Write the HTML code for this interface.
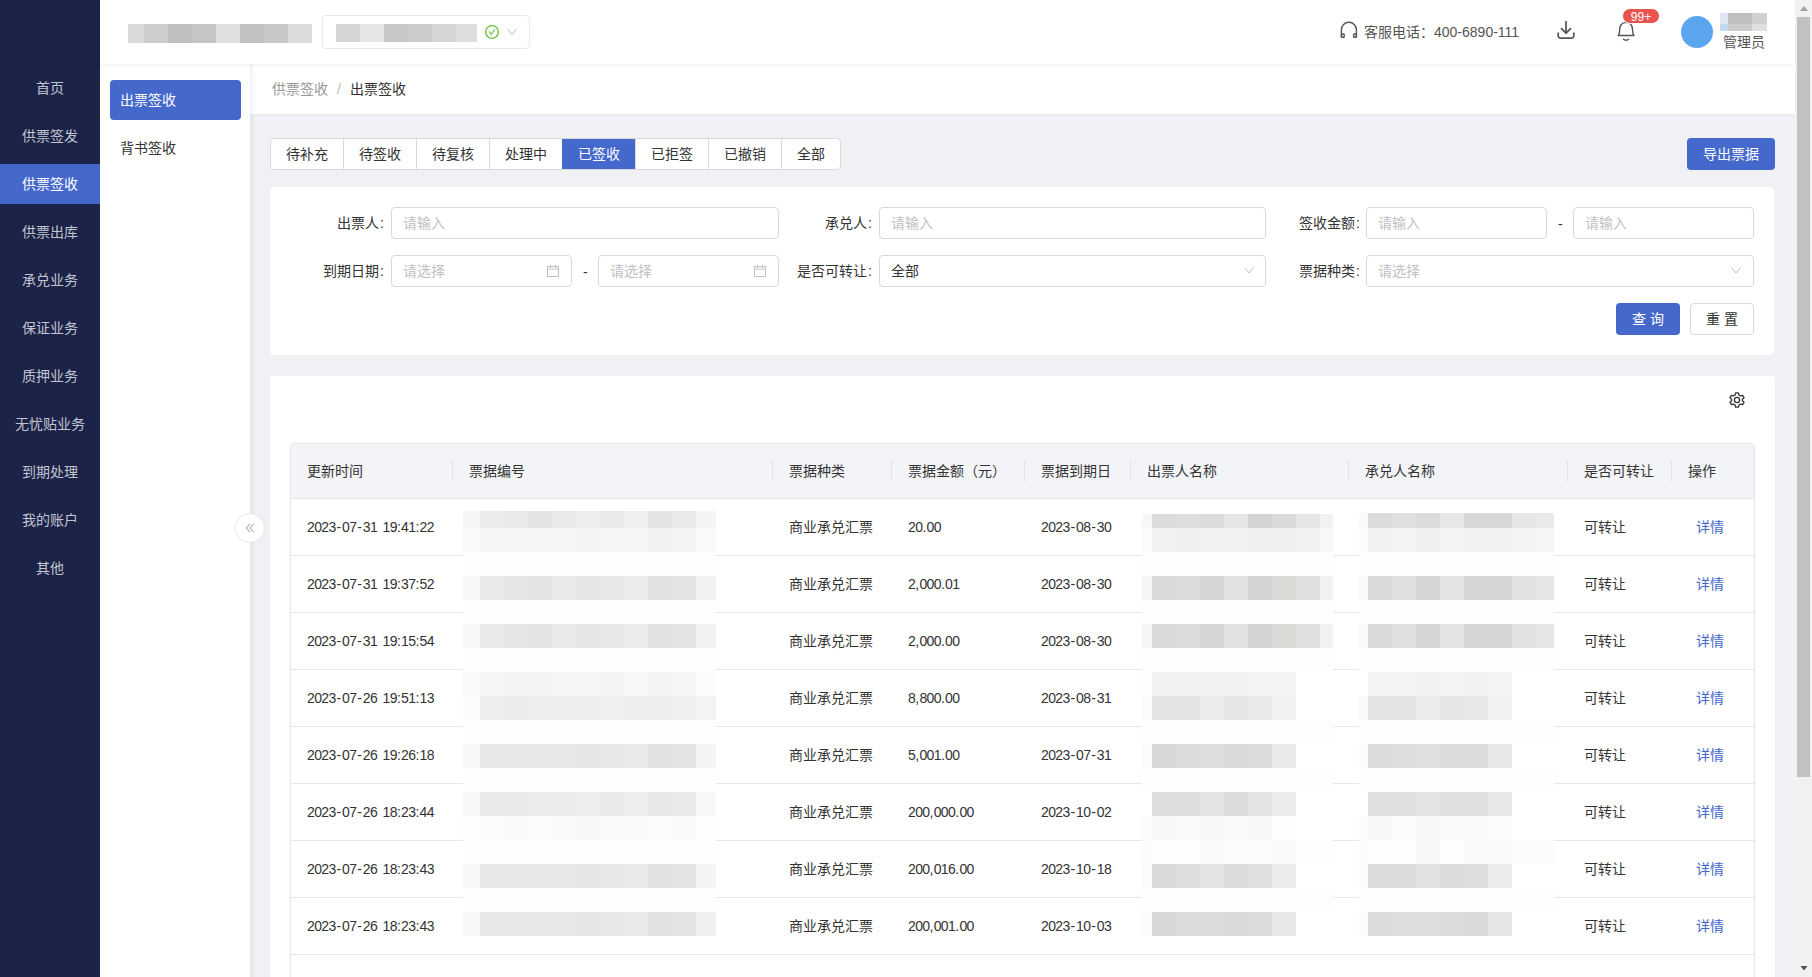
<!DOCTYPE html>
<html lang="zh-CN">
<head>
<meta charset="utf-8">
<style>
*{box-sizing:border-box;margin:0;padding:0}
html,body{width:1812px;height:977px;overflow:hidden;background:#f0f1f5}
body{font-family:"Liberation Sans",sans-serif;font-size:14px;color:#333;position:relative}
.a{position:absolute}
.nw{white-space:nowrap}
svg{position:absolute;overflow:visible}
#side{left:0;top:0;width:100px;height:977px;background:#1c2348}
.mi{position:absolute;left:0;width:100px;height:40px;line-height:40px;text-align:center;color:#c2c5d0}
.mi.on{background:#4468cc;color:#fff}
#hdr{left:100px;top:0;width:1695px;height:64px;background:#fff;box-shadow:0 1px 4px rgba(0,21,41,.06)}
#side2{left:100px;top:64px;width:150px;height:913px;background:#fff}
#crumb{left:250px;top:64px;width:1545px;height:50px;background:#fff;box-shadow:0 1px 3px rgba(0,0,0,.04)}
.shadowL{left:250px;top:64px;width:6px;height:913px;background:linear-gradient(90deg,rgba(0,0,0,.05),rgba(0,0,0,0))}
.tabs{left:270px;top:138px;height:32px;border:1px solid #d9d9d9;border-radius:4px;background:#fff;display:flex;overflow:hidden}
.tab{height:30px;line-height:30px;padding:0 15px;border-left:1px solid #d9d9d9;color:#333;white-space:nowrap}
.tab:first-child{border-left:0}
.tab.on{background:#4468cc;color:#fff;border-color:#4468cc}
.btnp{background:#4468cc;color:#fff;border-radius:4px;text-align:center;line-height:32px;height:32px}
.card{background:#fff;border-radius:4px}
.lbl{text-align:right;white-space:nowrap;line-height:32px;height:32px;color:#333}
.inp{height:32px;border:1px solid #d9d9d9;border-radius:4px;background:#fff;line-height:30px;padding-left:11px;color:#bfbfbf;white-space:nowrap}
.inp.val{color:#333}
.th,.td{position:absolute;white-space:nowrap;color:#333}
.lnk{color:#4468cc}
.mb{position:absolute}
</style>
</head>
<body>

<div id="side" class="a">
<div class="mi" style="top:68px">首页</div>
<div class="mi" style="top:116px">供票签发</div>
<div class="mi on" style="top:164px">供票签收</div>
<div class="mi" style="top:212px">供票出库</div>
<div class="mi" style="top:260px">承兑业务</div>
<div class="mi" style="top:308px">保证业务</div>
<div class="mi" style="top:356px">质押业务</div>
<div class="mi" style="top:404px">无忧贴业务</div>
<div class="mi" style="top:452px">到期处理</div>
<div class="mi" style="top:500px">我的账户</div>
<div class="mi" style="top:548px">其他</div>
</div>
<div id="side2" class="a">
<div class="a" style="left:10px;top:16px;width:131px;height:40px;border-radius:4px;background:#4468cc;color:#fff;line-height:40px;padding-left:10px">出票签收</div>
<div class="a" style="left:20px;top:64px;height:40px;line-height:40px;color:#333">背书签收</div>
</div>
<div id="crumb" class="a"><div class="a nw" style="left:22px;top:0;line-height:50px;color:#999">供票签收<span style="margin:0 9px;color:#bbb">/</span><span style="color:#333">出票签收</span></div></div>
<div class="a shadowL"></div>
<div id="hdr" class="a"></div>
<div class="mb" style="left:128px;top:24px;width:16px;height:19px;background:#d9d9d9"></div><div class="mb" style="left:144px;top:24px;width:24px;height:19px;background:#cdcdcd"></div><div class="mb" style="left:168px;top:24px;width:24px;height:19px;background:#c0c0c0"></div><div class="mb" style="left:192px;top:24px;width:24px;height:19px;background:#c5c5c5"></div><div class="mb" style="left:216px;top:24px;width:24px;height:19px;background:#e0e0e0"></div><div class="mb" style="left:240px;top:24px;width:24px;height:19px;background:#c2c2c2"></div><div class="mb" style="left:264px;top:24px;width:24px;height:19px;background:#c8c8c8"></div><div class="mb" style="left:288px;top:24px;width:24px;height:19px;background:#dcdcdc"></div>
<div class="a" style="left:322px;top:15px;width:208px;height:34px;border:1px solid #e8e8e8;border-radius:4px;background:#fff"></div>
<div class="mb" style="left:336px;top:24px;width:24px;height:18px;background:#d5d5d5"></div><div class="mb" style="left:360px;top:24px;width:24px;height:18px;background:#e5e5e5"></div><div class="mb" style="left:384px;top:24px;width:24px;height:18px;background:#c8c8c8"></div><div class="mb" style="left:408px;top:24px;width:24px;height:18px;background:#cccccc"></div><div class="mb" style="left:432px;top:24px;width:24px;height:18px;background:#d5d5d5"></div><div class="mb" style="left:456px;top:24px;width:21px;height:18px;background:#dddddd"></div>
<svg style="left:484px;top:24px" width="16" height="16" viewBox="0 0 16 16"><circle cx="8" cy="8" r="6.4" fill="none" stroke="#67c23a" stroke-width="1.3"/><path d="M4.9 7.4 L7.4 10.4 L10.7 5.3" fill="none" stroke="#67c23a" stroke-width="1.1"/></svg>
<svg style="left:507px;top:28px" width="10" height="8" viewBox="0 0 10 8"><path d="M0.5 1 L5 6.8 L9.5 1" fill="none" stroke="#c0c0c0" stroke-width="1"/></svg>
<svg style="left:1340px;top:21px" width="18" height="18" viewBox="0 0 18 18"><path d="M1.4 16.3 V8.8 A7.5 7.5 0 0 1 16.4 8.8 V16.3" fill="none" stroke="#555" stroke-width="1.4"/><rect x="1.4" y="13" width="2.8" height="3.3" rx="0.6" fill="none" stroke="#555" stroke-width="1.4"/><rect x="13.6" y="13" width="2.8" height="3.3" rx="0.6" fill="none" stroke="#555" stroke-width="1.4"/></svg>
<div class="a nw" style="left:1364px;top:22px;line-height:20px;color:#555">客服电话：400-6890-111</div>
<svg style="left:1550px;top:14px" width="34" height="32" viewBox="0 0 34 32"><path d="M16 7 V19" stroke="#555" stroke-width="1.7" fill="none"/><path d="M11 14.2 L16 19.2 L21 14.2" stroke="#555" stroke-width="1.7" fill="none"/><path d="M8.2 18.4 V21.8 a2.4 2.4 0 0 0 2.4 2.4 H21.4 a2.4 2.4 0 0 0 2.4 -2.4 V18.4" stroke="#555" stroke-width="1.7" fill="none"/></svg>
<svg style="left:1610px;top:5px" width="40" height="40" viewBox="0 0 40 40"><path d="M8.2 30.5 Q9.6 29 9.6 25.5 Q9.6 17.6 16.1 17.4 Q22.6 17.6 22.6 25.5 Q22.6 29 24 30.5 Z" fill="none" stroke="#555" stroke-width="1.4" stroke-linejoin="round"/><path d="M13 34 Q16.1 36.6 19.2 34" fill="none" stroke="#555" stroke-width="1.4"/></svg>
<div class="a nw" style="left:1622px;top:8px;width:38px;height:16px;border-radius:8px;background:#e85551;border:1px solid #fff;color:#fff;font-size:12px;line-height:16px;text-align:center">99+</div>
<div class="a" style="left:1681px;top:16px;width:32px;height:32px;border-radius:50%;background:#5ba4ee"></div>
<div class="mb" style="left:1720px;top:13px;width:8px;height:11px;background:#dfe8f2"></div><div class="mb" style="left:1728px;top:13px;width:24px;height:11px;background:#bfbfbf"></div><div class="mb" style="left:1752px;top:13px;width:15px;height:11px;background:#d0d0d0"></div><div class="mb" style="left:1720px;top:24px;width:8px;height:7px;background:#c2d9f0"></div><div class="mb" style="left:1728px;top:24px;width:24px;height:7px;background:#cbcbcb"></div><div class="mb" style="left:1752px;top:24px;width:15px;height:7px;background:#e0e0e0"></div>
<div class="a nw" style="left:1723px;top:32px;line-height:20px;color:#555">管理员</div>
<div class="a tabs"><div class="tab">待补充</div><div class="tab">待签收</div><div class="tab">待复核</div><div class="tab">处理中</div><div class="tab on">已签收</div><div class="tab">已拒签</div><div class="tab">已撤销</div><div class="tab">全部</div></div>
<div class="a btnp" style="left:1687px;top:138px;width:88px">导出票据</div>
<div class="a card" style="left:270px;top:187px;width:1504px;height:168px"></div>
<div class="a lbl" style="left:184px;top:207px;width:200px">出票人<span style="margin-left:1.5px">:</span></div>
<div class="a inp" style="left:391px;top:207px;width:388px">请输入</div>
<div class="a lbl" style="left:672px;top:207px;width:200px">承兑人<span style="margin-left:1.5px">:</span></div>
<div class="a inp" style="left:879px;top:207px;width:387px">请输入</div>
<div class="a lbl" style="left:1160px;top:207px;width:200px">签收金额<span style="margin-left:1.5px">:</span></div>
<div class="a inp" style="left:1366px;top:207px;width:181px">请输入</div>
<div class="a nw" style="left:1558px;top:208px;line-height:32px">-</div>
<div class="a inp" style="left:1573px;top:207px;width:181px">请输入</div>
<div class="a lbl" style="left:184px;top:255px;width:200px">到期日期<span style="margin-left:1.5px">:</span></div>
<div class="a inp" style="left:391px;top:255px;width:181px">请选择</div>
<svg style="left:547px;top:265px" width="12" height="12" viewBox="0 0 12 12"><rect x="0.5" y="1.5" width="11" height="10" fill="none" stroke="#c0c0c0" stroke-width="1"/><path d="M0.5 4 H11.5 M3.5 0 V3 M8.5 0 V3" stroke="#c0c0c0" stroke-width="1" fill="none"/></svg>
<div class="a nw" style="left:583px;top:256px;line-height:32px">-</div>
<div class="a inp" style="left:598px;top:255px;width:181px">请选择</div>
<svg style="left:754px;top:265px" width="12" height="12" viewBox="0 0 12 12"><rect x="0.5" y="1.5" width="11" height="10" fill="none" stroke="#c0c0c0" stroke-width="1"/><path d="M0.5 4 H11.5 M3.5 0 V3 M8.5 0 V3" stroke="#c0c0c0" stroke-width="1" fill="none"/></svg>
<div class="a lbl" style="left:672px;top:255px;width:200px">是否可转让<span style="margin-left:1.5px">:</span></div>
<div class="a inp val" style="left:879px;top:255px;width:387px">全部</div>
<svg style="left:1244px;top:267px" width="10" height="7" viewBox="0 0 10 7"><path d="M0.5 0.5 L5 6 L9.5 0.5" fill="none" stroke="#c0c0c0" stroke-width="1"/></svg>
<div class="a lbl" style="left:1160px;top:255px;width:200px">票据种类<span style="margin-left:1.5px">:</span></div>
<div class="a inp" style="left:1366px;top:255px;width:388px">请选择</div>
<svg style="left:1731px;top:267px" width="10" height="7" viewBox="0 0 10 7"><path d="M0.5 0.5 L5 6 L9.5 0.5" fill="none" stroke="#c0c0c0" stroke-width="1"/></svg>
<div class="a btnp" style="left:1616px;top:303px;width:64px">查 询</div>
<div class="a" style="left:1690px;top:303px;width:64px;height:32px;border:1px solid #d9d9d9;border-radius:4px;background:#fff;text-align:center;line-height:30px;color:#333">重 置</div>
<div class="a card" style="left:270px;top:376px;width:1505px;height:640px"></div>
<svg style="left:1729px;top:392px" width="16" height="16" viewBox="0 0 16 16"><path d="M6.6 0.9 H9.4 L9.9 3 L11.5 3.9 L13.6 3.3 L15 5.7 L13.4 7.2 V8.8 L15 10.3 L13.6 12.7 L11.5 12.1 L9.9 13 L9.4 15.1 H6.6 L6.1 13 L4.5 12.1 L2.4 12.7 L1 10.3 L2.6 8.8 V7.2 L1 5.7 L2.4 3.3 L4.5 3.9 L6.1 3 Z" fill="none" stroke="#333" stroke-width="1.3" stroke-linejoin="round"/><circle cx="8" cy="8" r="2.6" fill="none" stroke="#333" stroke-width="1.3"/></svg>
<div class="a" style="left:290px;top:443px;width:1465px;height:600px;border:1px solid #e6e6e6;border-radius:4px 4px 0 0;background:#fff"></div>
<div class="a" style="left:291px;top:444px;width:1463px;height:54px;background:#f3f4f8;border-radius:3px 3px 0 0"></div>
<div class="a" style="left:290px;top:498px;width:1465px;height:1px;background:#e6e6e6"></div>
<div class="th" style="left:307px;top:461px;line-height:20px">更新时间</div>
<div class="th" style="left:469px;top:461px;line-height:20px">票据编号</div>
<div class="a" style="left:452px;top:460px;width:1px;height:22px;background:#e3e3e3"></div>
<div class="th" style="left:789px;top:461px;line-height:20px">票据种类</div>
<div class="a" style="left:772px;top:460px;width:1px;height:22px;background:#e3e3e3"></div>
<div class="th" style="left:908px;top:461px;line-height:20px">票据金额（元）</div>
<div class="a" style="left:891px;top:460px;width:1px;height:22px;background:#e3e3e3"></div>
<div class="th" style="left:1041px;top:461px;line-height:20px">票据到期日</div>
<div class="a" style="left:1024px;top:460px;width:1px;height:22px;background:#e3e3e3"></div>
<div class="th" style="left:1147px;top:461px;line-height:20px">出票人名称</div>
<div class="a" style="left:1130px;top:460px;width:1px;height:22px;background:#e3e3e3"></div>
<div class="th" style="left:1365px;top:461px;line-height:20px">承兑人名称</div>
<div class="a" style="left:1348px;top:460px;width:1px;height:22px;background:#e3e3e3"></div>
<div class="th" style="left:1584px;top:461px;line-height:20px">是否可转让</div>
<div class="a" style="left:1567px;top:460px;width:1px;height:22px;background:#e3e3e3"></div>
<div class="th" style="left:1688px;top:461px;line-height:20px">操作</div>
<div class="a" style="left:1671px;top:460px;width:1px;height:22px;background:#e3e3e3"></div>
<div class="a" style="left:290px;top:555px;width:1465px;height:1px;background:#e6e6e6"></div>
<div class="td" style="left:307px;top:517px;line-height:20px"><span style="letter-spacing:-0.65px">2</span><span style="letter-spacing:-0.65px">0</span><span style="letter-spacing:-0.65px">2</span><span style="letter-spacing:-0.65px">3</span><span style="margin:0 0.9px">-</span><span style="letter-spacing:-0.65px">0</span><span style="letter-spacing:-0.65px">7</span><span style="margin:0 0.9px">-</span><span style="letter-spacing:-0.65px">3</span><span style="letter-spacing:-0.65px">1</span><span style="margin:0 0.8px"> </span><span style="letter-spacing:-0.65px">1</span><span style="letter-spacing:-0.65px">9</span><span style="margin:0 0.2px">:</span><span style="letter-spacing:-0.65px">4</span><span style="letter-spacing:-0.65px">1</span><span style="margin:0 0.2px">:</span><span style="letter-spacing:-0.65px">2</span><span style="letter-spacing:-0.65px">2</span></div>
<div class="td" style="left:789px;top:517px;line-height:20px">商业承兑汇票</div>
<div class="td" style="left:908px;top:517px;line-height:20px"><span style="letter-spacing:-0.65px">2</span><span style="letter-spacing:-0.65px">0</span><span style="margin:0 0.2px">.</span><span style="letter-spacing:-0.65px">0</span><span style="letter-spacing:-0.65px">0</span></div>
<div class="td" style="left:1041px;top:517px;line-height:20px"><span style="letter-spacing:-0.65px">2</span><span style="letter-spacing:-0.65px">0</span><span style="letter-spacing:-0.65px">2</span><span style="letter-spacing:-0.65px">3</span><span style="margin:0 0.9px">-</span><span style="letter-spacing:-0.65px">0</span><span style="letter-spacing:-0.65px">8</span><span style="margin:0 0.9px">-</span><span style="letter-spacing:-0.65px">3</span><span style="letter-spacing:-0.65px">0</span></div>
<div class="td" style="left:1584px;top:517px;line-height:20px">可转让</div>
<div class="td lnk" style="left:1696px;top:517px;line-height:20px">详情</div>
<div class="a" style="left:290px;top:612px;width:1465px;height:1px;background:#e6e6e6"></div>
<div class="td" style="left:307px;top:574px;line-height:20px"><span style="letter-spacing:-0.65px">2</span><span style="letter-spacing:-0.65px">0</span><span style="letter-spacing:-0.65px">2</span><span style="letter-spacing:-0.65px">3</span><span style="margin:0 0.9px">-</span><span style="letter-spacing:-0.65px">0</span><span style="letter-spacing:-0.65px">7</span><span style="margin:0 0.9px">-</span><span style="letter-spacing:-0.65px">3</span><span style="letter-spacing:-0.65px">1</span><span style="margin:0 0.8px"> </span><span style="letter-spacing:-0.65px">1</span><span style="letter-spacing:-0.65px">9</span><span style="margin:0 0.2px">:</span><span style="letter-spacing:-0.65px">3</span><span style="letter-spacing:-0.65px">7</span><span style="margin:0 0.2px">:</span><span style="letter-spacing:-0.65px">5</span><span style="letter-spacing:-0.65px">2</span></div>
<div class="td" style="left:789px;top:574px;line-height:20px">商业承兑汇票</div>
<div class="td" style="left:908px;top:574px;line-height:20px"><span style="letter-spacing:-0.65px">2</span><span style="margin:0 0.2px">,</span><span style="letter-spacing:-0.65px">0</span><span style="letter-spacing:-0.65px">0</span><span style="letter-spacing:-0.65px">0</span><span style="margin:0 0.2px">.</span><span style="letter-spacing:-0.65px">0</span><span style="letter-spacing:-0.65px">1</span></div>
<div class="td" style="left:1041px;top:574px;line-height:20px"><span style="letter-spacing:-0.65px">2</span><span style="letter-spacing:-0.65px">0</span><span style="letter-spacing:-0.65px">2</span><span style="letter-spacing:-0.65px">3</span><span style="margin:0 0.9px">-</span><span style="letter-spacing:-0.65px">0</span><span style="letter-spacing:-0.65px">8</span><span style="margin:0 0.9px">-</span><span style="letter-spacing:-0.65px">3</span><span style="letter-spacing:-0.65px">0</span></div>
<div class="td" style="left:1584px;top:574px;line-height:20px">可转让</div>
<div class="td lnk" style="left:1696px;top:574px;line-height:20px">详情</div>
<div class="a" style="left:290px;top:669px;width:1465px;height:1px;background:#e6e6e6"></div>
<div class="td" style="left:307px;top:631px;line-height:20px"><span style="letter-spacing:-0.65px">2</span><span style="letter-spacing:-0.65px">0</span><span style="letter-spacing:-0.65px">2</span><span style="letter-spacing:-0.65px">3</span><span style="margin:0 0.9px">-</span><span style="letter-spacing:-0.65px">0</span><span style="letter-spacing:-0.65px">7</span><span style="margin:0 0.9px">-</span><span style="letter-spacing:-0.65px">3</span><span style="letter-spacing:-0.65px">1</span><span style="margin:0 0.8px"> </span><span style="letter-spacing:-0.65px">1</span><span style="letter-spacing:-0.65px">9</span><span style="margin:0 0.2px">:</span><span style="letter-spacing:-0.65px">1</span><span style="letter-spacing:-0.65px">5</span><span style="margin:0 0.2px">:</span><span style="letter-spacing:-0.65px">5</span><span style="letter-spacing:-0.65px">4</span></div>
<div class="td" style="left:789px;top:631px;line-height:20px">商业承兑汇票</div>
<div class="td" style="left:908px;top:631px;line-height:20px"><span style="letter-spacing:-0.65px">2</span><span style="margin:0 0.2px">,</span><span style="letter-spacing:-0.65px">0</span><span style="letter-spacing:-0.65px">0</span><span style="letter-spacing:-0.65px">0</span><span style="margin:0 0.2px">.</span><span style="letter-spacing:-0.65px">0</span><span style="letter-spacing:-0.65px">0</span></div>
<div class="td" style="left:1041px;top:631px;line-height:20px"><span style="letter-spacing:-0.65px">2</span><span style="letter-spacing:-0.65px">0</span><span style="letter-spacing:-0.65px">2</span><span style="letter-spacing:-0.65px">3</span><span style="margin:0 0.9px">-</span><span style="letter-spacing:-0.65px">0</span><span style="letter-spacing:-0.65px">8</span><span style="margin:0 0.9px">-</span><span style="letter-spacing:-0.65px">3</span><span style="letter-spacing:-0.65px">0</span></div>
<div class="td" style="left:1584px;top:631px;line-height:20px">可转让</div>
<div class="td lnk" style="left:1696px;top:631px;line-height:20px">详情</div>
<div class="a" style="left:290px;top:726px;width:1465px;height:1px;background:#e6e6e6"></div>
<div class="td" style="left:307px;top:688px;line-height:20px"><span style="letter-spacing:-0.65px">2</span><span style="letter-spacing:-0.65px">0</span><span style="letter-spacing:-0.65px">2</span><span style="letter-spacing:-0.65px">3</span><span style="margin:0 0.9px">-</span><span style="letter-spacing:-0.65px">0</span><span style="letter-spacing:-0.65px">7</span><span style="margin:0 0.9px">-</span><span style="letter-spacing:-0.65px">2</span><span style="letter-spacing:-0.65px">6</span><span style="margin:0 0.8px"> </span><span style="letter-spacing:-0.65px">1</span><span style="letter-spacing:-0.65px">9</span><span style="margin:0 0.2px">:</span><span style="letter-spacing:-0.65px">5</span><span style="letter-spacing:-0.65px">1</span><span style="margin:0 0.2px">:</span><span style="letter-spacing:-0.65px">1</span><span style="letter-spacing:-0.65px">3</span></div>
<div class="td" style="left:789px;top:688px;line-height:20px">商业承兑汇票</div>
<div class="td" style="left:908px;top:688px;line-height:20px"><span style="letter-spacing:-0.65px">8</span><span style="margin:0 0.2px">,</span><span style="letter-spacing:-0.65px">8</span><span style="letter-spacing:-0.65px">0</span><span style="letter-spacing:-0.65px">0</span><span style="margin:0 0.2px">.</span><span style="letter-spacing:-0.65px">0</span><span style="letter-spacing:-0.65px">0</span></div>
<div class="td" style="left:1041px;top:688px;line-height:20px"><span style="letter-spacing:-0.65px">2</span><span style="letter-spacing:-0.65px">0</span><span style="letter-spacing:-0.65px">2</span><span style="letter-spacing:-0.65px">3</span><span style="margin:0 0.9px">-</span><span style="letter-spacing:-0.65px">0</span><span style="letter-spacing:-0.65px">8</span><span style="margin:0 0.9px">-</span><span style="letter-spacing:-0.65px">3</span><span style="letter-spacing:-0.65px">1</span></div>
<div class="td" style="left:1584px;top:688px;line-height:20px">可转让</div>
<div class="td lnk" style="left:1696px;top:688px;line-height:20px">详情</div>
<div class="a" style="left:290px;top:783px;width:1465px;height:1px;background:#e6e6e6"></div>
<div class="td" style="left:307px;top:745px;line-height:20px"><span style="letter-spacing:-0.65px">2</span><span style="letter-spacing:-0.65px">0</span><span style="letter-spacing:-0.65px">2</span><span style="letter-spacing:-0.65px">3</span><span style="margin:0 0.9px">-</span><span style="letter-spacing:-0.65px">0</span><span style="letter-spacing:-0.65px">7</span><span style="margin:0 0.9px">-</span><span style="letter-spacing:-0.65px">2</span><span style="letter-spacing:-0.65px">6</span><span style="margin:0 0.8px"> </span><span style="letter-spacing:-0.65px">1</span><span style="letter-spacing:-0.65px">9</span><span style="margin:0 0.2px">:</span><span style="letter-spacing:-0.65px">2</span><span style="letter-spacing:-0.65px">6</span><span style="margin:0 0.2px">:</span><span style="letter-spacing:-0.65px">1</span><span style="letter-spacing:-0.65px">8</span></div>
<div class="td" style="left:789px;top:745px;line-height:20px">商业承兑汇票</div>
<div class="td" style="left:908px;top:745px;line-height:20px"><span style="letter-spacing:-0.65px">5</span><span style="margin:0 0.2px">,</span><span style="letter-spacing:-0.65px">0</span><span style="letter-spacing:-0.65px">0</span><span style="letter-spacing:-0.65px">1</span><span style="margin:0 0.2px">.</span><span style="letter-spacing:-0.65px">0</span><span style="letter-spacing:-0.65px">0</span></div>
<div class="td" style="left:1041px;top:745px;line-height:20px"><span style="letter-spacing:-0.65px">2</span><span style="letter-spacing:-0.65px">0</span><span style="letter-spacing:-0.65px">2</span><span style="letter-spacing:-0.65px">3</span><span style="margin:0 0.9px">-</span><span style="letter-spacing:-0.65px">0</span><span style="letter-spacing:-0.65px">7</span><span style="margin:0 0.9px">-</span><span style="letter-spacing:-0.65px">3</span><span style="letter-spacing:-0.65px">1</span></div>
<div class="td" style="left:1584px;top:745px;line-height:20px">可转让</div>
<div class="td lnk" style="left:1696px;top:745px;line-height:20px">详情</div>
<div class="a" style="left:290px;top:840px;width:1465px;height:1px;background:#e6e6e6"></div>
<div class="td" style="left:307px;top:802px;line-height:20px"><span style="letter-spacing:-0.65px">2</span><span style="letter-spacing:-0.65px">0</span><span style="letter-spacing:-0.65px">2</span><span style="letter-spacing:-0.65px">3</span><span style="margin:0 0.9px">-</span><span style="letter-spacing:-0.65px">0</span><span style="letter-spacing:-0.65px">7</span><span style="margin:0 0.9px">-</span><span style="letter-spacing:-0.65px">2</span><span style="letter-spacing:-0.65px">6</span><span style="margin:0 0.8px"> </span><span style="letter-spacing:-0.65px">1</span><span style="letter-spacing:-0.65px">8</span><span style="margin:0 0.2px">:</span><span style="letter-spacing:-0.65px">2</span><span style="letter-spacing:-0.65px">3</span><span style="margin:0 0.2px">:</span><span style="letter-spacing:-0.65px">4</span><span style="letter-spacing:-0.65px">4</span></div>
<div class="td" style="left:789px;top:802px;line-height:20px">商业承兑汇票</div>
<div class="td" style="left:908px;top:802px;line-height:20px"><span style="letter-spacing:-0.65px">2</span><span style="letter-spacing:-0.65px">0</span><span style="letter-spacing:-0.65px">0</span><span style="margin:0 0.2px">,</span><span style="letter-spacing:-0.65px">0</span><span style="letter-spacing:-0.65px">0</span><span style="letter-spacing:-0.65px">0</span><span style="margin:0 0.2px">.</span><span style="letter-spacing:-0.65px">0</span><span style="letter-spacing:-0.65px">0</span></div>
<div class="td" style="left:1041px;top:802px;line-height:20px"><span style="letter-spacing:-0.65px">2</span><span style="letter-spacing:-0.65px">0</span><span style="letter-spacing:-0.65px">2</span><span style="letter-spacing:-0.65px">3</span><span style="margin:0 0.9px">-</span><span style="letter-spacing:-0.65px">1</span><span style="letter-spacing:-0.65px">0</span><span style="margin:0 0.9px">-</span><span style="letter-spacing:-0.65px">0</span><span style="letter-spacing:-0.65px">2</span></div>
<div class="td" style="left:1584px;top:802px;line-height:20px">可转让</div>
<div class="td lnk" style="left:1696px;top:802px;line-height:20px">详情</div>
<div class="a" style="left:290px;top:897px;width:1465px;height:1px;background:#e6e6e6"></div>
<div class="td" style="left:307px;top:859px;line-height:20px"><span style="letter-spacing:-0.65px">2</span><span style="letter-spacing:-0.65px">0</span><span style="letter-spacing:-0.65px">2</span><span style="letter-spacing:-0.65px">3</span><span style="margin:0 0.9px">-</span><span style="letter-spacing:-0.65px">0</span><span style="letter-spacing:-0.65px">7</span><span style="margin:0 0.9px">-</span><span style="letter-spacing:-0.65px">2</span><span style="letter-spacing:-0.65px">6</span><span style="margin:0 0.8px"> </span><span style="letter-spacing:-0.65px">1</span><span style="letter-spacing:-0.65px">8</span><span style="margin:0 0.2px">:</span><span style="letter-spacing:-0.65px">2</span><span style="letter-spacing:-0.65px">3</span><span style="margin:0 0.2px">:</span><span style="letter-spacing:-0.65px">4</span><span style="letter-spacing:-0.65px">3</span></div>
<div class="td" style="left:789px;top:859px;line-height:20px">商业承兑汇票</div>
<div class="td" style="left:908px;top:859px;line-height:20px"><span style="letter-spacing:-0.65px">2</span><span style="letter-spacing:-0.65px">0</span><span style="letter-spacing:-0.65px">0</span><span style="margin:0 0.2px">,</span><span style="letter-spacing:-0.65px">0</span><span style="letter-spacing:-0.65px">1</span><span style="letter-spacing:-0.65px">6</span><span style="margin:0 0.2px">.</span><span style="letter-spacing:-0.65px">0</span><span style="letter-spacing:-0.65px">0</span></div>
<div class="td" style="left:1041px;top:859px;line-height:20px"><span style="letter-spacing:-0.65px">2</span><span style="letter-spacing:-0.65px">0</span><span style="letter-spacing:-0.65px">2</span><span style="letter-spacing:-0.65px">3</span><span style="margin:0 0.9px">-</span><span style="letter-spacing:-0.65px">1</span><span style="letter-spacing:-0.65px">0</span><span style="margin:0 0.9px">-</span><span style="letter-spacing:-0.65px">1</span><span style="letter-spacing:-0.65px">8</span></div>
<div class="td" style="left:1584px;top:859px;line-height:20px">可转让</div>
<div class="td lnk" style="left:1696px;top:859px;line-height:20px">详情</div>
<div class="a" style="left:290px;top:954px;width:1465px;height:1px;background:#e6e6e6"></div>
<div class="td" style="left:307px;top:916px;line-height:20px"><span style="letter-spacing:-0.65px">2</span><span style="letter-spacing:-0.65px">0</span><span style="letter-spacing:-0.65px">2</span><span style="letter-spacing:-0.65px">3</span><span style="margin:0 0.9px">-</span><span style="letter-spacing:-0.65px">0</span><span style="letter-spacing:-0.65px">7</span><span style="margin:0 0.9px">-</span><span style="letter-spacing:-0.65px">2</span><span style="letter-spacing:-0.65px">6</span><span style="margin:0 0.8px"> </span><span style="letter-spacing:-0.65px">1</span><span style="letter-spacing:-0.65px">8</span><span style="margin:0 0.2px">:</span><span style="letter-spacing:-0.65px">2</span><span style="letter-spacing:-0.65px">3</span><span style="margin:0 0.2px">:</span><span style="letter-spacing:-0.65px">4</span><span style="letter-spacing:-0.65px">3</span></div>
<div class="td" style="left:789px;top:916px;line-height:20px">商业承兑汇票</div>
<div class="td" style="left:908px;top:916px;line-height:20px"><span style="letter-spacing:-0.65px">2</span><span style="letter-spacing:-0.65px">0</span><span style="letter-spacing:-0.65px">0</span><span style="margin:0 0.2px">,</span><span style="letter-spacing:-0.65px">0</span><span style="letter-spacing:-0.65px">0</span><span style="letter-spacing:-0.65px">1</span><span style="margin:0 0.2px">.</span><span style="letter-spacing:-0.65px">0</span><span style="letter-spacing:-0.65px">0</span></div>
<div class="td" style="left:1041px;top:916px;line-height:20px"><span style="letter-spacing:-0.65px">2</span><span style="letter-spacing:-0.65px">0</span><span style="letter-spacing:-0.65px">2</span><span style="letter-spacing:-0.65px">3</span><span style="margin:0 0.9px">-</span><span style="letter-spacing:-0.65px">1</span><span style="letter-spacing:-0.65px">0</span><span style="margin:0 0.9px">-</span><span style="letter-spacing:-0.65px">0</span><span style="letter-spacing:-0.65px">3</span></div>
<div class="td" style="left:1584px;top:916px;line-height:20px">可转让</div>
<div class="td lnk" style="left:1696px;top:916px;line-height:20px">详情</div>
<div class="mb" style="left:463px;top:511px;width:17px;height:17px;background:#f5f5f5"></div><div class="mb" style="left:480px;top:511px;width:24px;height:17px;background:#ebebeb"></div><div class="mb" style="left:504px;top:511px;width:24px;height:17px;background:#e9e9e9"></div><div class="mb" style="left:528px;top:511px;width:24px;height:17px;background:#e3e3e3"></div><div class="mb" style="left:552px;top:511px;width:24px;height:17px;background:#e9eaea"></div><div class="mb" style="left:576px;top:511px;width:24px;height:17px;background:#ededed"></div><div class="mb" style="left:600px;top:511px;width:24px;height:17px;background:#e9e9e9"></div><div class="mb" style="left:624px;top:511px;width:24px;height:17px;background:#efefef"></div><div class="mb" style="left:648px;top:511px;width:24px;height:17px;background:#e4e4e4"></div><div class="mb" style="left:672px;top:511px;width:24px;height:17px;background:#e8e9e9"></div><div class="mb" style="left:696px;top:511px;width:20px;height:17px;background:#f4f4f4"></div><div class="mb" style="left:463px;top:528px;width:17px;height:24px;background:#fafafa"></div><div class="mb" style="left:480px;top:528px;width:24px;height:24px;background:#f5f5f5"></div><div class="mb" style="left:504px;top:528px;width:24px;height:24px;background:#f5f5f5"></div><div class="mb" style="left:528px;top:528px;width:24px;height:24px;background:#f5f5f5"></div><div class="mb" style="left:552px;top:528px;width:24px;height:24px;background:#f6f6f6"></div><div class="mb" style="left:576px;top:528px;width:24px;height:24px;background:#f3f3f3"></div><div class="mb" style="left:600px;top:528px;width:24px;height:24px;background:#f5f5f5"></div><div class="mb" style="left:624px;top:528px;width:24px;height:24px;background:#f6f6f6"></div><div class="mb" style="left:648px;top:528px;width:24px;height:24px;background:#f1f3f3"></div><div class="mb" style="left:672px;top:528px;width:24px;height:24px;background:#f4f4f4"></div><div class="mb" style="left:696px;top:528px;width:20px;height:24px;background:#f9f9f9"></div><div class="mb" style="left:463px;top:552px;width:17px;height:24px;background:#fefefe"></div><div class="mb" style="left:480px;top:552px;width:24px;height:24px;background:#fefefe"></div><div class="mb" style="left:504px;top:552px;width:24px;height:24px;background:#fefefe"></div><div class="mb" style="left:528px;top:552px;width:24px;height:24px;background:#fefefe"></div><div class="mb" style="left:552px;top:552px;width:24px;height:24px;background:#fefefe"></div><div class="mb" style="left:576px;top:552px;width:24px;height:24px;background:#fefefe"></div><div class="mb" style="left:600px;top:552px;width:24px;height:24px;background:#fefefe"></div><div class="mb" style="left:624px;top:552px;width:24px;height:24px;background:#fefefe"></div><div class="mb" style="left:648px;top:552px;width:24px;height:24px;background:#fefefe"></div><div class="mb" style="left:672px;top:552px;width:24px;height:24px;background:#fefefe"></div><div class="mb" style="left:696px;top:552px;width:20px;height:24px;background:#fefefe"></div><div class="mb" style="left:463px;top:576px;width:17px;height:24px;background:#f7f7f7"></div><div class="mb" style="left:480px;top:576px;width:24px;height:24px;background:#e8eaea"></div><div class="mb" style="left:504px;top:576px;width:24px;height:24px;background:#e6e6e6"></div><div class="mb" style="left:528px;top:576px;width:24px;height:24px;background:#e3e3e3"></div><div class="mb" style="left:552px;top:576px;width:24px;height:24px;background:#e8e9e9"></div><div class="mb" style="left:576px;top:576px;width:24px;height:24px;background:#e6e6e6"></div><div class="mb" style="left:600px;top:576px;width:24px;height:24px;background:#e8e8e8"></div><div class="mb" style="left:624px;top:576px;width:24px;height:24px;background:#ececec"></div><div class="mb" style="left:648px;top:576px;width:24px;height:24px;background:#e2e2e2"></div><div class="mb" style="left:672px;top:576px;width:24px;height:24px;background:#e3e3e3"></div><div class="mb" style="left:696px;top:576px;width:20px;height:24px;background:#f2f2f2"></div><div class="mb" style="left:463px;top:600px;width:17px;height:24px;background:#fefefe"></div><div class="mb" style="left:480px;top:600px;width:24px;height:24px;background:#fefefe"></div><div class="mb" style="left:504px;top:600px;width:24px;height:24px;background:#fefefe"></div><div class="mb" style="left:528px;top:600px;width:24px;height:24px;background:#fefefe"></div><div class="mb" style="left:552px;top:600px;width:24px;height:24px;background:#fefefe"></div><div class="mb" style="left:576px;top:600px;width:24px;height:24px;background:#fefefe"></div><div class="mb" style="left:600px;top:600px;width:24px;height:24px;background:#fefefe"></div><div class="mb" style="left:624px;top:600px;width:24px;height:24px;background:#fefefe"></div><div class="mb" style="left:648px;top:600px;width:24px;height:24px;background:#fefefe"></div><div class="mb" style="left:672px;top:600px;width:24px;height:24px;background:#fefefe"></div><div class="mb" style="left:696px;top:600px;width:20px;height:24px;background:#fefefe"></div><div class="mb" style="left:463px;top:624px;width:17px;height:24px;background:#f7f7f7"></div><div class="mb" style="left:480px;top:624px;width:24px;height:24px;background:#e8eaea"></div><div class="mb" style="left:504px;top:624px;width:24px;height:24px;background:#e6e6e6"></div><div class="mb" style="left:528px;top:624px;width:24px;height:24px;background:#e3e3e3"></div><div class="mb" style="left:552px;top:624px;width:24px;height:24px;background:#e8e9e9"></div><div class="mb" style="left:576px;top:624px;width:24px;height:24px;background:#e6e6e6"></div><div class="mb" style="left:600px;top:624px;width:24px;height:24px;background:#e8e8e8"></div><div class="mb" style="left:624px;top:624px;width:24px;height:24px;background:#ececec"></div><div class="mb" style="left:648px;top:624px;width:24px;height:24px;background:#e2e2e2"></div><div class="mb" style="left:672px;top:624px;width:24px;height:24px;background:#e3e3e3"></div><div class="mb" style="left:696px;top:624px;width:20px;height:24px;background:#f2f2f2"></div><div class="mb" style="left:463px;top:648px;width:17px;height:24px;background:#fefefe"></div><div class="mb" style="left:480px;top:648px;width:24px;height:24px;background:#fefefe"></div><div class="mb" style="left:504px;top:648px;width:24px;height:24px;background:#fefefe"></div><div class="mb" style="left:528px;top:648px;width:24px;height:24px;background:#fefefe"></div><div class="mb" style="left:552px;top:648px;width:24px;height:24px;background:#fefefe"></div><div class="mb" style="left:576px;top:648px;width:24px;height:24px;background:#fefefe"></div><div class="mb" style="left:600px;top:648px;width:24px;height:24px;background:#fefefe"></div><div class="mb" style="left:624px;top:648px;width:24px;height:24px;background:#fefefe"></div><div class="mb" style="left:648px;top:648px;width:24px;height:24px;background:#fefefe"></div><div class="mb" style="left:672px;top:648px;width:24px;height:24px;background:#fefefe"></div><div class="mb" style="left:696px;top:648px;width:20px;height:24px;background:#fefefe"></div><div class="mb" style="left:463px;top:672px;width:17px;height:24px;background:#fafafa"></div><div class="mb" style="left:480px;top:672px;width:24px;height:24px;background:#f5f5f5"></div><div class="mb" style="left:504px;top:672px;width:24px;height:24px;background:#f3f3f3"></div><div class="mb" style="left:528px;top:672px;width:24px;height:24px;background:#f3f5f4"></div><div class="mb" style="left:552px;top:672px;width:24px;height:24px;background:#f6f6f6"></div><div class="mb" style="left:576px;top:672px;width:24px;height:24px;background:#f5f5f5"></div><div class="mb" style="left:600px;top:672px;width:24px;height:24px;background:#f3f3f3"></div><div class="mb" style="left:624px;top:672px;width:24px;height:24px;background:#f7f7f7"></div><div class="mb" style="left:648px;top:672px;width:24px;height:24px;background:#f3f3f3"></div><div class="mb" style="left:672px;top:672px;width:24px;height:24px;background:#f5f5f5"></div><div class="mb" style="left:696px;top:672px;width:20px;height:24px;background:#fbfbfb"></div><div class="mb" style="left:463px;top:696px;width:17px;height:24px;background:#fbfbfb"></div><div class="mb" style="left:480px;top:696px;width:24px;height:24px;background:#eeeeee"></div><div class="mb" style="left:504px;top:696px;width:24px;height:24px;background:#ececec"></div><div class="mb" style="left:528px;top:696px;width:24px;height:24px;background:#eeeeec"></div><div class="mb" style="left:552px;top:696px;width:24px;height:24px;background:#ecefee"></div><div class="mb" style="left:576px;top:696px;width:24px;height:24px;background:#eeeeec"></div><div class="mb" style="left:600px;top:696px;width:24px;height:24px;background:#efefef"></div><div class="mb" style="left:624px;top:696px;width:24px;height:24px;background:#eeeeee"></div><div class="mb" style="left:648px;top:696px;width:24px;height:24px;background:#eceef0"></div><div class="mb" style="left:672px;top:696px;width:24px;height:24px;background:#f0eeee"></div><div class="mb" style="left:696px;top:696px;width:20px;height:24px;background:#f3f3f3"></div><div class="mb" style="left:463px;top:720px;width:17px;height:24px;background:#fefefe"></div><div class="mb" style="left:480px;top:720px;width:24px;height:24px;background:#fefefe"></div><div class="mb" style="left:504px;top:720px;width:24px;height:24px;background:#fefefe"></div><div class="mb" style="left:528px;top:720px;width:24px;height:24px;background:#fefefe"></div><div class="mb" style="left:552px;top:720px;width:24px;height:24px;background:#fefefe"></div><div class="mb" style="left:576px;top:720px;width:24px;height:24px;background:#fefefe"></div><div class="mb" style="left:600px;top:720px;width:24px;height:24px;background:#fefefe"></div><div class="mb" style="left:624px;top:720px;width:24px;height:24px;background:#fefefe"></div><div class="mb" style="left:648px;top:720px;width:24px;height:24px;background:#fefefe"></div><div class="mb" style="left:672px;top:720px;width:24px;height:24px;background:#fefefe"></div><div class="mb" style="left:696px;top:720px;width:20px;height:24px;background:#fefefe"></div><div class="mb" style="left:463px;top:744px;width:17px;height:24px;background:#f7f7f7"></div><div class="mb" style="left:480px;top:744px;width:24px;height:24px;background:#e7e9e9"></div><div class="mb" style="left:504px;top:744px;width:24px;height:24px;background:#e9e8e6"></div><div class="mb" style="left:528px;top:744px;width:24px;height:24px;background:#e8e8e6"></div><div class="mb" style="left:552px;top:744px;width:24px;height:24px;background:#e7e7e7"></div><div class="mb" style="left:576px;top:744px;width:24px;height:24px;background:#e6e6e6"></div><div class="mb" style="left:600px;top:744px;width:24px;height:24px;background:#e7e7e5"></div><div class="mb" style="left:624px;top:744px;width:24px;height:24px;background:#e9e9e9"></div><div class="mb" style="left:648px;top:744px;width:24px;height:24px;background:#e2e2e2"></div><div class="mb" style="left:672px;top:744px;width:24px;height:24px;background:#e3e3e3"></div><div class="mb" style="left:696px;top:744px;width:20px;height:24px;background:#f3f4f4"></div><div class="mb" style="left:463px;top:768px;width:17px;height:24px;background:#fefefe"></div><div class="mb" style="left:480px;top:768px;width:24px;height:24px;background:#fefefe"></div><div class="mb" style="left:504px;top:768px;width:24px;height:24px;background:#fefefe"></div><div class="mb" style="left:528px;top:768px;width:24px;height:24px;background:#fefefe"></div><div class="mb" style="left:552px;top:768px;width:24px;height:24px;background:#fefefe"></div><div class="mb" style="left:576px;top:768px;width:24px;height:24px;background:#fefefe"></div><div class="mb" style="left:600px;top:768px;width:24px;height:24px;background:#fefefe"></div><div class="mb" style="left:624px;top:768px;width:24px;height:24px;background:#fefefe"></div><div class="mb" style="left:648px;top:768px;width:24px;height:24px;background:#fefefe"></div><div class="mb" style="left:672px;top:768px;width:24px;height:24px;background:#fefefe"></div><div class="mb" style="left:696px;top:768px;width:20px;height:24px;background:#fefefe"></div><div class="mb" style="left:463px;top:792px;width:17px;height:24px;background:#f7f7f7"></div><div class="mb" style="left:480px;top:792px;width:24px;height:24px;background:#e9ebeb"></div><div class="mb" style="left:504px;top:792px;width:24px;height:24px;background:#eaeae8"></div><div class="mb" style="left:528px;top:792px;width:24px;height:24px;background:#ebebeb"></div><div class="mb" style="left:552px;top:792px;width:24px;height:24px;background:#ebebeb"></div><div class="mb" style="left:576px;top:792px;width:24px;height:24px;background:#ededeb"></div><div class="mb" style="left:600px;top:792px;width:24px;height:24px;background:#eaeaea"></div><div class="mb" style="left:624px;top:792px;width:24px;height:24px;background:#ededeb"></div><div class="mb" style="left:648px;top:792px;width:24px;height:24px;background:#e6e8e8"></div><div class="mb" style="left:672px;top:792px;width:24px;height:24px;background:#eaeaea"></div><div class="mb" style="left:696px;top:792px;width:20px;height:24px;background:#f7f7f7"></div><div class="mb" style="left:463px;top:816px;width:17px;height:24px;background:#fdfdfd"></div><div class="mb" style="left:480px;top:816px;width:24px;height:24px;background:#fbfbfb"></div><div class="mb" style="left:504px;top:816px;width:24px;height:24px;background:#fafafa"></div><div class="mb" style="left:528px;top:816px;width:24px;height:24px;background:#fbfbf9"></div><div class="mb" style="left:552px;top:816px;width:24px;height:24px;background:#fafafa"></div><div class="mb" style="left:576px;top:816px;width:24px;height:24px;background:#f8f8f8"></div><div class="mb" style="left:600px;top:816px;width:24px;height:24px;background:#f9fafa"></div><div class="mb" style="left:624px;top:816px;width:24px;height:24px;background:#f9fafa"></div><div class="mb" style="left:648px;top:816px;width:24px;height:24px;background:#fbfbfb"></div><div class="mb" style="left:672px;top:816px;width:24px;height:24px;background:#f9f9f9"></div><div class="mb" style="left:696px;top:816px;width:20px;height:24px;background:#fdfdfd"></div><div class="mb" style="left:463px;top:840px;width:17px;height:24px;background:#fefefe"></div><div class="mb" style="left:480px;top:840px;width:24px;height:24px;background:#fefefe"></div><div class="mb" style="left:504px;top:840px;width:24px;height:24px;background:#fefefe"></div><div class="mb" style="left:528px;top:840px;width:24px;height:24px;background:#fefefe"></div><div class="mb" style="left:552px;top:840px;width:24px;height:24px;background:#fefefe"></div><div class="mb" style="left:576px;top:840px;width:24px;height:24px;background:#fefefe"></div><div class="mb" style="left:600px;top:840px;width:24px;height:24px;background:#fefefe"></div><div class="mb" style="left:624px;top:840px;width:24px;height:24px;background:#fefefe"></div><div class="mb" style="left:648px;top:840px;width:24px;height:24px;background:#fefefe"></div><div class="mb" style="left:672px;top:840px;width:24px;height:24px;background:#fefefe"></div><div class="mb" style="left:696px;top:840px;width:20px;height:24px;background:#fefefe"></div><div class="mb" style="left:463px;top:864px;width:17px;height:24px;background:#f7f7f7"></div><div class="mb" style="left:480px;top:864px;width:24px;height:24px;background:#e7e9e9"></div><div class="mb" style="left:504px;top:864px;width:24px;height:24px;background:#e9e8e6"></div><div class="mb" style="left:528px;top:864px;width:24px;height:24px;background:#e8e8e6"></div><div class="mb" style="left:552px;top:864px;width:24px;height:24px;background:#e7e7e7"></div><div class="mb" style="left:576px;top:864px;width:24px;height:24px;background:#e6e6e6"></div><div class="mb" style="left:600px;top:864px;width:24px;height:24px;background:#e7e7e5"></div><div class="mb" style="left:624px;top:864px;width:24px;height:24px;background:#e9e9e9"></div><div class="mb" style="left:648px;top:864px;width:24px;height:24px;background:#e2e2e2"></div><div class="mb" style="left:672px;top:864px;width:24px;height:24px;background:#e3e3e3"></div><div class="mb" style="left:696px;top:864px;width:20px;height:24px;background:#f3f4f4"></div><div class="mb" style="left:463px;top:888px;width:17px;height:24px;background:#fefefe"></div><div class="mb" style="left:480px;top:888px;width:24px;height:24px;background:#fefefe"></div><div class="mb" style="left:504px;top:888px;width:24px;height:24px;background:#fefefe"></div><div class="mb" style="left:528px;top:888px;width:24px;height:24px;background:#fefefe"></div><div class="mb" style="left:552px;top:888px;width:24px;height:24px;background:#fefefe"></div><div class="mb" style="left:576px;top:888px;width:24px;height:24px;background:#fefefe"></div><div class="mb" style="left:600px;top:888px;width:24px;height:24px;background:#fefefe"></div><div class="mb" style="left:624px;top:888px;width:24px;height:24px;background:#fefefe"></div><div class="mb" style="left:648px;top:888px;width:24px;height:24px;background:#fefefe"></div><div class="mb" style="left:672px;top:888px;width:24px;height:24px;background:#fefefe"></div><div class="mb" style="left:696px;top:888px;width:20px;height:24px;background:#fefefe"></div><div class="mb" style="left:463px;top:912px;width:17px;height:24px;background:#f7f7f7"></div><div class="mb" style="left:480px;top:912px;width:24px;height:24px;background:#e7e9e9"></div><div class="mb" style="left:504px;top:912px;width:24px;height:24px;background:#e9e8e6"></div><div class="mb" style="left:528px;top:912px;width:24px;height:24px;background:#e8e8e6"></div><div class="mb" style="left:552px;top:912px;width:24px;height:24px;background:#e7e7e7"></div><div class="mb" style="left:576px;top:912px;width:24px;height:24px;background:#e6e6e6"></div><div class="mb" style="left:600px;top:912px;width:24px;height:24px;background:#e7e7e5"></div><div class="mb" style="left:624px;top:912px;width:24px;height:24px;background:#e9e9e9"></div><div class="mb" style="left:648px;top:912px;width:24px;height:24px;background:#e2e2e2"></div><div class="mb" style="left:672px;top:912px;width:24px;height:24px;background:#e3e3e3"></div><div class="mb" style="left:696px;top:912px;width:20px;height:24px;background:#eff0f2"></div><div class="mb" style="left:463px;top:936px;width:17px;height:18px;background:#ffffff"></div><div class="mb" style="left:480px;top:936px;width:24px;height:18px;background:#ffffff"></div><div class="mb" style="left:504px;top:936px;width:24px;height:18px;background:#ffffff"></div><div class="mb" style="left:528px;top:936px;width:24px;height:18px;background:#ffffff"></div><div class="mb" style="left:552px;top:936px;width:24px;height:18px;background:#ffffff"></div><div class="mb" style="left:576px;top:936px;width:24px;height:18px;background:#ffffff"></div><div class="mb" style="left:600px;top:936px;width:24px;height:18px;background:#ffffff"></div><div class="mb" style="left:624px;top:936px;width:24px;height:18px;background:#ffffff"></div><div class="mb" style="left:648px;top:936px;width:24px;height:18px;background:#ffffff"></div><div class="mb" style="left:672px;top:936px;width:24px;height:18px;background:#ffffff"></div><div class="mb" style="left:696px;top:936px;width:20px;height:18px;background:#ffffff"></div>
<div class="mb" style="left:1142px;top:514px;width:10px;height:14px;background:#f7f7f7"></div><div class="mb" style="left:1152px;top:514px;width:24px;height:14px;background:#dcdcdc"></div><div class="mb" style="left:1176px;top:514px;width:24px;height:14px;background:#dedede"></div><div class="mb" style="left:1200px;top:514px;width:24px;height:14px;background:#dcdcdc"></div><div class="mb" style="left:1224px;top:514px;width:24px;height:14px;background:#e6e6e6"></div><div class="mb" style="left:1248px;top:514px;width:24px;height:14px;background:#d4d4d4"></div><div class="mb" style="left:1272px;top:514px;width:24px;height:14px;background:#dadada"></div><div class="mb" style="left:1296px;top:514px;width:24px;height:14px;background:#e5e5e5"></div><div class="mb" style="left:1320px;top:514px;width:13px;height:14px;background:#f2f2f2"></div><div class="mb" style="left:1142px;top:528px;width:10px;height:24px;background:#fbfbfb"></div><div class="mb" style="left:1152px;top:528px;width:24px;height:24px;background:#f2f2f2"></div><div class="mb" style="left:1176px;top:528px;width:24px;height:24px;background:#f0f0f0"></div><div class="mb" style="left:1200px;top:528px;width:24px;height:24px;background:#f1f1f1"></div><div class="mb" style="left:1224px;top:528px;width:24px;height:24px;background:#f2f2f2"></div><div class="mb" style="left:1248px;top:528px;width:24px;height:24px;background:#eff1f0"></div><div class="mb" style="left:1272px;top:528px;width:24px;height:24px;background:#f0f0ee"></div><div class="mb" style="left:1296px;top:528px;width:24px;height:24px;background:#f1f1f1"></div><div class="mb" style="left:1320px;top:528px;width:13px;height:24px;background:#f8f8f8"></div><div class="mb" style="left:1142px;top:552px;width:10px;height:24px;background:#fefefe"></div><div class="mb" style="left:1152px;top:552px;width:24px;height:24px;background:#fefefe"></div><div class="mb" style="left:1176px;top:552px;width:24px;height:24px;background:#fefefe"></div><div class="mb" style="left:1200px;top:552px;width:24px;height:24px;background:#fefefe"></div><div class="mb" style="left:1224px;top:552px;width:24px;height:24px;background:#fefefe"></div><div class="mb" style="left:1248px;top:552px;width:24px;height:24px;background:#fefefe"></div><div class="mb" style="left:1272px;top:552px;width:24px;height:24px;background:#fefefe"></div><div class="mb" style="left:1296px;top:552px;width:24px;height:24px;background:#fefefe"></div><div class="mb" style="left:1320px;top:552px;width:13px;height:24px;background:#fefefe"></div><div class="mb" style="left:1142px;top:576px;width:10px;height:24px;background:#f6f6f4"></div><div class="mb" style="left:1152px;top:576px;width:24px;height:24px;background:#dadad8"></div><div class="mb" style="left:1176px;top:576px;width:24px;height:24px;background:#dcdadb"></div><div class="mb" style="left:1200px;top:576px;width:24px;height:24px;background:#d6d6d6"></div><div class="mb" style="left:1224px;top:576px;width:24px;height:24px;background:#e2e2e4"></div><div class="mb" style="left:1248px;top:576px;width:24px;height:24px;background:#d3d3d3"></div><div class="mb" style="left:1272px;top:576px;width:24px;height:24px;background:#dadad6"></div><div class="mb" style="left:1296px;top:576px;width:24px;height:24px;background:#e0e0e0"></div><div class="mb" style="left:1320px;top:576px;width:13px;height:24px;background:#f2f2f2"></div><div class="mb" style="left:1142px;top:600px;width:10px;height:24px;background:#fefefe"></div><div class="mb" style="left:1152px;top:600px;width:24px;height:24px;background:#fefefe"></div><div class="mb" style="left:1176px;top:600px;width:24px;height:24px;background:#fefefe"></div><div class="mb" style="left:1200px;top:600px;width:24px;height:24px;background:#fefefe"></div><div class="mb" style="left:1224px;top:600px;width:24px;height:24px;background:#fefefe"></div><div class="mb" style="left:1248px;top:600px;width:24px;height:24px;background:#fefefe"></div><div class="mb" style="left:1272px;top:600px;width:24px;height:24px;background:#fefefe"></div><div class="mb" style="left:1296px;top:600px;width:24px;height:24px;background:#fefefe"></div><div class="mb" style="left:1320px;top:600px;width:13px;height:24px;background:#fefefe"></div><div class="mb" style="left:1142px;top:624px;width:10px;height:24px;background:#f6f6f4"></div><div class="mb" style="left:1152px;top:624px;width:24px;height:24px;background:#dadad8"></div><div class="mb" style="left:1176px;top:624px;width:24px;height:24px;background:#dcdadb"></div><div class="mb" style="left:1200px;top:624px;width:24px;height:24px;background:#d6d6d6"></div><div class="mb" style="left:1224px;top:624px;width:24px;height:24px;background:#e2e2e4"></div><div class="mb" style="left:1248px;top:624px;width:24px;height:24px;background:#d3d3d3"></div><div class="mb" style="left:1272px;top:624px;width:24px;height:24px;background:#dadad6"></div><div class="mb" style="left:1296px;top:624px;width:24px;height:24px;background:#e0e0e0"></div><div class="mb" style="left:1320px;top:624px;width:13px;height:24px;background:#f2f2f2"></div><div class="mb" style="left:1142px;top:648px;width:10px;height:24px;background:#fefefe"></div><div class="mb" style="left:1152px;top:648px;width:24px;height:24px;background:#fefefe"></div><div class="mb" style="left:1176px;top:648px;width:24px;height:24px;background:#fefefe"></div><div class="mb" style="left:1200px;top:648px;width:24px;height:24px;background:#fefefe"></div><div class="mb" style="left:1224px;top:648px;width:24px;height:24px;background:#fefefe"></div><div class="mb" style="left:1248px;top:648px;width:24px;height:24px;background:#fefefe"></div><div class="mb" style="left:1272px;top:648px;width:24px;height:24px;background:#fefefe"></div><div class="mb" style="left:1296px;top:648px;width:24px;height:24px;background:#fefefe"></div><div class="mb" style="left:1320px;top:648px;width:13px;height:24px;background:#fefefe"></div><div class="mb" style="left:1142px;top:672px;width:10px;height:24px;background:#fdfdfd"></div><div class="mb" style="left:1152px;top:672px;width:24px;height:24px;background:#f2f2f2"></div><div class="mb" style="left:1176px;top:672px;width:24px;height:24px;background:#f2f2f2"></div><div class="mb" style="left:1200px;top:672px;width:24px;height:24px;background:#f1f1f1"></div><div class="mb" style="left:1224px;top:672px;width:24px;height:24px;background:#f1f1f1"></div><div class="mb" style="left:1248px;top:672px;width:24px;height:24px;background:#f2f3f3"></div><div class="mb" style="left:1272px;top:672px;width:24px;height:24px;background:#f4f4f4"></div><div class="mb" style="left:1296px;top:672px;width:24px;height:24px;background:#fff"></div><div class="mb" style="left:1320px;top:672px;width:13px;height:24px;background:#fff"></div><div class="mb" style="left:1142px;top:696px;width:10px;height:24px;background:#fbfbfb"></div><div class="mb" style="left:1152px;top:696px;width:24px;height:24px;background:#e3e3e3"></div><div class="mb" style="left:1176px;top:696px;width:24px;height:24px;background:#e1e4e3"></div><div class="mb" style="left:1200px;top:696px;width:24px;height:24px;background:#ebebe9"></div><div class="mb" style="left:1224px;top:696px;width:24px;height:24px;background:#e5e5e3"></div><div class="mb" style="left:1248px;top:696px;width:24px;height:24px;background:#e9e9e9"></div><div class="mb" style="left:1272px;top:696px;width:24px;height:24px;background:#f1f1ef"></div><div class="mb" style="left:1296px;top:696px;width:24px;height:24px;background:#fff"></div><div class="mb" style="left:1320px;top:696px;width:13px;height:24px;background:#fff"></div><div class="mb" style="left:1142px;top:720px;width:10px;height:24px;background:#fefefe"></div><div class="mb" style="left:1152px;top:720px;width:24px;height:24px;background:#fefefe"></div><div class="mb" style="left:1176px;top:720px;width:24px;height:24px;background:#fefefe"></div><div class="mb" style="left:1200px;top:720px;width:24px;height:24px;background:#fefefe"></div><div class="mb" style="left:1224px;top:720px;width:24px;height:24px;background:#fefefe"></div><div class="mb" style="left:1248px;top:720px;width:24px;height:24px;background:#fefefe"></div><div class="mb" style="left:1272px;top:720px;width:24px;height:24px;background:#fefefe"></div><div class="mb" style="left:1296px;top:720px;width:24px;height:24px;background:#fefefe"></div><div class="mb" style="left:1320px;top:720px;width:13px;height:24px;background:#fefefe"></div><div class="mb" style="left:1142px;top:744px;width:10px;height:24px;background:#fbfbfb"></div><div class="mb" style="left:1152px;top:744px;width:24px;height:24px;background:#d8d8d8"></div><div class="mb" style="left:1176px;top:744px;width:24px;height:24px;background:#dadcdb"></div><div class="mb" style="left:1200px;top:744px;width:24px;height:24px;background:#dededc"></div><div class="mb" style="left:1224px;top:744px;width:24px;height:24px;background:#d9d9d9"></div><div class="mb" style="left:1248px;top:744px;width:24px;height:24px;background:#dcdcdc"></div><div class="mb" style="left:1272px;top:744px;width:24px;height:24px;background:#e9e9e7"></div><div class="mb" style="left:1296px;top:744px;width:24px;height:24px;background:#fff"></div><div class="mb" style="left:1320px;top:744px;width:13px;height:24px;background:#fff"></div><div class="mb" style="left:1142px;top:768px;width:10px;height:24px;background:#fefefe"></div><div class="mb" style="left:1152px;top:768px;width:24px;height:24px;background:#fefefe"></div><div class="mb" style="left:1176px;top:768px;width:24px;height:24px;background:#fefefe"></div><div class="mb" style="left:1200px;top:768px;width:24px;height:24px;background:#fefefe"></div><div class="mb" style="left:1224px;top:768px;width:24px;height:24px;background:#fefefe"></div><div class="mb" style="left:1248px;top:768px;width:24px;height:24px;background:#fefefe"></div><div class="mb" style="left:1272px;top:768px;width:24px;height:24px;background:#fefefe"></div><div class="mb" style="left:1296px;top:768px;width:24px;height:24px;background:#fefefe"></div><div class="mb" style="left:1320px;top:768px;width:13px;height:24px;background:#fefefe"></div><div class="mb" style="left:1142px;top:792px;width:10px;height:24px;background:#fff"></div><div class="mb" style="left:1152px;top:792px;width:24px;height:24px;background:#dedede"></div><div class="mb" style="left:1176px;top:792px;width:24px;height:24px;background:#dedede"></div><div class="mb" style="left:1200px;top:792px;width:24px;height:24px;background:#e4e4e2"></div><div class="mb" style="left:1224px;top:792px;width:24px;height:24px;background:#dcdcdc"></div><div class="mb" style="left:1248px;top:792px;width:24px;height:24px;background:#e2e4e3"></div><div class="mb" style="left:1272px;top:792px;width:24px;height:24px;background:#ebebe9"></div><div class="mb" style="left:1296px;top:792px;width:24px;height:24px;background:#fff"></div><div class="mb" style="left:1320px;top:792px;width:13px;height:24px;background:#fff"></div><div class="mb" style="left:1142px;top:816px;width:10px;height:24px;background:#fcfcfc"></div><div class="mb" style="left:1152px;top:816px;width:24px;height:24px;background:#f8f8f8"></div><div class="mb" style="left:1176px;top:816px;width:24px;height:24px;background:#f9f9f9"></div><div class="mb" style="left:1200px;top:816px;width:24px;height:24px;background:#f8f8f8"></div><div class="mb" style="left:1224px;top:816px;width:24px;height:24px;background:#f9f9f9"></div><div class="mb" style="left:1248px;top:816px;width:24px;height:24px;background:#f8f8f8"></div><div class="mb" style="left:1272px;top:816px;width:24px;height:24px;background:#fefefe"></div><div class="mb" style="left:1296px;top:816px;width:24px;height:24px;background:#fff"></div><div class="mb" style="left:1320px;top:816px;width:13px;height:24px;background:#fff"></div><div class="mb" style="left:1142px;top:840px;width:10px;height:24px;background:#fcfcfc"></div><div class="mb" style="left:1152px;top:840px;width:24px;height:24px;background:#fdfdfd"></div><div class="mb" style="left:1176px;top:840px;width:24px;height:24px;background:#fdfdfd"></div><div class="mb" style="left:1200px;top:840px;width:24px;height:24px;background:#f9f9f9"></div><div class="mb" style="left:1224px;top:840px;width:24px;height:24px;background:#fcfcfc"></div><div class="mb" style="left:1248px;top:840px;width:24px;height:24px;background:#fbfbfb"></div><div class="mb" style="left:1272px;top:840px;width:24px;height:24px;background:#fafafa"></div><div class="mb" style="left:1296px;top:840px;width:24px;height:24px;background:#fdfdfd"></div><div class="mb" style="left:1320px;top:840px;width:13px;height:24px;background:#fdfdfd"></div><div class="mb" style="left:1142px;top:864px;width:10px;height:24px;background:#fbfbfb"></div><div class="mb" style="left:1152px;top:864px;width:24px;height:24px;background:#d9d9d9"></div><div class="mb" style="left:1176px;top:864px;width:24px;height:24px;background:#dcdedd"></div><div class="mb" style="left:1200px;top:864px;width:24px;height:24px;background:#e4e4e2"></div><div class="mb" style="left:1224px;top:864px;width:24px;height:24px;background:#dcdcdc"></div><div class="mb" style="left:1248px;top:864px;width:24px;height:24px;background:#e0e0e0"></div><div class="mb" style="left:1272px;top:864px;width:24px;height:24px;background:#ececea"></div><div class="mb" style="left:1296px;top:864px;width:24px;height:24px;background:#fff"></div><div class="mb" style="left:1320px;top:864px;width:13px;height:24px;background:#fff"></div><div class="mb" style="left:1142px;top:888px;width:10px;height:24px;background:#fefefe"></div><div class="mb" style="left:1152px;top:888px;width:24px;height:24px;background:#fefefe"></div><div class="mb" style="left:1176px;top:888px;width:24px;height:24px;background:#fefefe"></div><div class="mb" style="left:1200px;top:888px;width:24px;height:24px;background:#fefefe"></div><div class="mb" style="left:1224px;top:888px;width:24px;height:24px;background:#fefefe"></div><div class="mb" style="left:1248px;top:888px;width:24px;height:24px;background:#fefefe"></div><div class="mb" style="left:1272px;top:888px;width:24px;height:24px;background:#fefefe"></div><div class="mb" style="left:1296px;top:888px;width:24px;height:24px;background:#fefefe"></div><div class="mb" style="left:1320px;top:888px;width:13px;height:24px;background:#fefefe"></div><div class="mb" style="left:1142px;top:912px;width:10px;height:24px;background:#fcfcfc"></div><div class="mb" style="left:1152px;top:912px;width:24px;height:24px;background:#d8d8d8"></div><div class="mb" style="left:1176px;top:912px;width:24px;height:24px;background:#dadcdb"></div><div class="mb" style="left:1200px;top:912px;width:24px;height:24px;background:#dcdcdc"></div><div class="mb" style="left:1224px;top:912px;width:24px;height:24px;background:#d9d9d9"></div><div class="mb" style="left:1248px;top:912px;width:24px;height:24px;background:#dcdcdc"></div><div class="mb" style="left:1272px;top:912px;width:24px;height:24px;background:#e8e8e6"></div><div class="mb" style="left:1296px;top:912px;width:24px;height:24px;background:#fff"></div><div class="mb" style="left:1320px;top:912px;width:13px;height:24px;background:#fff"></div><div class="mb" style="left:1142px;top:936px;width:10px;height:18px;background:#ffffff"></div><div class="mb" style="left:1152px;top:936px;width:24px;height:18px;background:#ffffff"></div><div class="mb" style="left:1176px;top:936px;width:24px;height:18px;background:#ffffff"></div><div class="mb" style="left:1200px;top:936px;width:24px;height:18px;background:#ffffff"></div><div class="mb" style="left:1224px;top:936px;width:24px;height:18px;background:#ffffff"></div><div class="mb" style="left:1248px;top:936px;width:24px;height:18px;background:#ffffff"></div><div class="mb" style="left:1272px;top:936px;width:24px;height:18px;background:#ffffff"></div><div class="mb" style="left:1296px;top:936px;width:24px;height:18px;background:#ffffff"></div><div class="mb" style="left:1320px;top:936px;width:13px;height:18px;background:#ffffff"></div>
<div class="mb" style="left:1359px;top:513px;width:9px;height:15px;background:#fafafa"></div><div class="mb" style="left:1368px;top:513px;width:24px;height:15px;background:#dcdcdc"></div><div class="mb" style="left:1392px;top:513px;width:24px;height:15px;background:#e0e0e0"></div><div class="mb" style="left:1416px;top:513px;width:24px;height:15px;background:#dcdcdc"></div><div class="mb" style="left:1440px;top:513px;width:24px;height:15px;background:#e6e8e7"></div><div class="mb" style="left:1464px;top:513px;width:24px;height:15px;background:#d8d7d5"></div><div class="mb" style="left:1488px;top:513px;width:24px;height:15px;background:#d9d8d6"></div><div class="mb" style="left:1512px;top:513px;width:24px;height:15px;background:#e5e7e6"></div><div class="mb" style="left:1536px;top:513px;width:18px;height:15px;background:#e8eae9"></div><div class="mb" style="left:1359px;top:528px;width:9px;height:24px;background:#fbfbfb"></div><div class="mb" style="left:1368px;top:528px;width:24px;height:24px;background:#f1f1f1"></div><div class="mb" style="left:1392px;top:528px;width:24px;height:24px;background:#f3f3f3"></div><div class="mb" style="left:1416px;top:528px;width:24px;height:24px;background:#efefef"></div><div class="mb" style="left:1440px;top:528px;width:24px;height:24px;background:#f2f3f3"></div><div class="mb" style="left:1464px;top:528px;width:24px;height:24px;background:#f1f1f1"></div><div class="mb" style="left:1488px;top:528px;width:24px;height:24px;background:#f2f1ef"></div><div class="mb" style="left:1512px;top:528px;width:24px;height:24px;background:#f3f3f3"></div><div class="mb" style="left:1536px;top:528px;width:18px;height:24px;background:#f6f6f6"></div><div class="mb" style="left:1359px;top:552px;width:9px;height:24px;background:#fefefe"></div><div class="mb" style="left:1368px;top:552px;width:24px;height:24px;background:#fefefe"></div><div class="mb" style="left:1392px;top:552px;width:24px;height:24px;background:#fefefe"></div><div class="mb" style="left:1416px;top:552px;width:24px;height:24px;background:#fefefe"></div><div class="mb" style="left:1440px;top:552px;width:24px;height:24px;background:#fefefe"></div><div class="mb" style="left:1464px;top:552px;width:24px;height:24px;background:#fefefe"></div><div class="mb" style="left:1488px;top:552px;width:24px;height:24px;background:#fefefe"></div><div class="mb" style="left:1512px;top:552px;width:24px;height:24px;background:#fefefe"></div><div class="mb" style="left:1536px;top:552px;width:18px;height:24px;background:#fefefe"></div><div class="mb" style="left:1359px;top:576px;width:9px;height:24px;background:#f9f9f9"></div><div class="mb" style="left:1368px;top:576px;width:24px;height:24px;background:#d9d9d9"></div><div class="mb" style="left:1392px;top:576px;width:24px;height:24px;background:#e0e0e0"></div><div class="mb" style="left:1416px;top:576px;width:24px;height:24px;background:#d6d6d6"></div><div class="mb" style="left:1440px;top:576px;width:24px;height:24px;background:#e3e4e3"></div><div class="mb" style="left:1464px;top:576px;width:24px;height:24px;background:#d7d6d4"></div><div class="mb" style="left:1488px;top:576px;width:24px;height:24px;background:#d7d6d4"></div><div class="mb" style="left:1512px;top:576px;width:24px;height:24px;background:#e1e2e4"></div><div class="mb" style="left:1536px;top:576px;width:18px;height:24px;background:#e5e5e5"></div><div class="mb" style="left:1359px;top:600px;width:9px;height:24px;background:#fefefe"></div><div class="mb" style="left:1368px;top:600px;width:24px;height:24px;background:#fefefe"></div><div class="mb" style="left:1392px;top:600px;width:24px;height:24px;background:#fefefe"></div><div class="mb" style="left:1416px;top:600px;width:24px;height:24px;background:#fefefe"></div><div class="mb" style="left:1440px;top:600px;width:24px;height:24px;background:#fefefe"></div><div class="mb" style="left:1464px;top:600px;width:24px;height:24px;background:#fefefe"></div><div class="mb" style="left:1488px;top:600px;width:24px;height:24px;background:#fefefe"></div><div class="mb" style="left:1512px;top:600px;width:24px;height:24px;background:#fefefe"></div><div class="mb" style="left:1536px;top:600px;width:18px;height:24px;background:#fefefe"></div><div class="mb" style="left:1359px;top:624px;width:9px;height:24px;background:#f9f9f9"></div><div class="mb" style="left:1368px;top:624px;width:24px;height:24px;background:#d9d9d9"></div><div class="mb" style="left:1392px;top:624px;width:24px;height:24px;background:#e0e0e0"></div><div class="mb" style="left:1416px;top:624px;width:24px;height:24px;background:#d6d6d6"></div><div class="mb" style="left:1440px;top:624px;width:24px;height:24px;background:#e3e4e3"></div><div class="mb" style="left:1464px;top:624px;width:24px;height:24px;background:#d7d6d4"></div><div class="mb" style="left:1488px;top:624px;width:24px;height:24px;background:#d7d6d4"></div><div class="mb" style="left:1512px;top:624px;width:24px;height:24px;background:#e1e2e4"></div><div class="mb" style="left:1536px;top:624px;width:18px;height:24px;background:#e5e5e5"></div><div class="mb" style="left:1359px;top:648px;width:9px;height:24px;background:#fefefe"></div><div class="mb" style="left:1368px;top:648px;width:24px;height:24px;background:#fefefe"></div><div class="mb" style="left:1392px;top:648px;width:24px;height:24px;background:#fefefe"></div><div class="mb" style="left:1416px;top:648px;width:24px;height:24px;background:#fefefe"></div><div class="mb" style="left:1440px;top:648px;width:24px;height:24px;background:#fefefe"></div><div class="mb" style="left:1464px;top:648px;width:24px;height:24px;background:#fefefe"></div><div class="mb" style="left:1488px;top:648px;width:24px;height:24px;background:#fefefe"></div><div class="mb" style="left:1512px;top:648px;width:24px;height:24px;background:#fefefe"></div><div class="mb" style="left:1536px;top:648px;width:18px;height:24px;background:#fefefe"></div><div class="mb" style="left:1359px;top:672px;width:9px;height:24px;background:#fff"></div><div class="mb" style="left:1368px;top:672px;width:24px;height:24px;background:#f3f3f3"></div><div class="mb" style="left:1392px;top:672px;width:24px;height:24px;background:#f3f3f3"></div><div class="mb" style="left:1416px;top:672px;width:24px;height:24px;background:#f2f2f2"></div><div class="mb" style="left:1440px;top:672px;width:24px;height:24px;background:#f2f3f3"></div><div class="mb" style="left:1464px;top:672px;width:24px;height:24px;background:#f2f2f2"></div><div class="mb" style="left:1488px;top:672px;width:24px;height:24px;background:#f4f4f4"></div><div class="mb" style="left:1512px;top:672px;width:24px;height:24px;background:#fff"></div><div class="mb" style="left:1536px;top:672px;width:18px;height:24px;background:#fff"></div><div class="mb" style="left:1359px;top:696px;width:9px;height:24px;background:#fafafa"></div><div class="mb" style="left:1368px;top:696px;width:24px;height:24px;background:#e4e4e4"></div><div class="mb" style="left:1392px;top:696px;width:24px;height:24px;background:#e2e5e4"></div><div class="mb" style="left:1416px;top:696px;width:24px;height:24px;background:#ebebeb"></div><div class="mb" style="left:1440px;top:696px;width:24px;height:24px;background:#e5e5e3"></div><div class="mb" style="left:1464px;top:696px;width:24px;height:24px;background:#e7e7e5"></div><div class="mb" style="left:1488px;top:696px;width:24px;height:24px;background:#f1f1f1"></div><div class="mb" style="left:1512px;top:696px;width:24px;height:24px;background:#fff"></div><div class="mb" style="left:1536px;top:696px;width:18px;height:24px;background:#fff"></div><div class="mb" style="left:1359px;top:720px;width:9px;height:24px;background:#fefefe"></div><div class="mb" style="left:1368px;top:720px;width:24px;height:24px;background:#fefefe"></div><div class="mb" style="left:1392px;top:720px;width:24px;height:24px;background:#fefefe"></div><div class="mb" style="left:1416px;top:720px;width:24px;height:24px;background:#fefefe"></div><div class="mb" style="left:1440px;top:720px;width:24px;height:24px;background:#fefefe"></div><div class="mb" style="left:1464px;top:720px;width:24px;height:24px;background:#fefefe"></div><div class="mb" style="left:1488px;top:720px;width:24px;height:24px;background:#fefefe"></div><div class="mb" style="left:1512px;top:720px;width:24px;height:24px;background:#fefefe"></div><div class="mb" style="left:1536px;top:720px;width:18px;height:24px;background:#fefefe"></div><div class="mb" style="left:1359px;top:744px;width:9px;height:24px;background:#fcfcfc"></div><div class="mb" style="left:1368px;top:744px;width:24px;height:24px;background:#dddcda"></div><div class="mb" style="left:1392px;top:744px;width:24px;height:24px;background:#dcdedd"></div><div class="mb" style="left:1416px;top:744px;width:24px;height:24px;background:#dfdfdd"></div><div class="mb" style="left:1440px;top:744px;width:24px;height:24px;background:#dbdbdb"></div><div class="mb" style="left:1464px;top:744px;width:24px;height:24px;background:#dbdbd9"></div><div class="mb" style="left:1488px;top:744px;width:24px;height:24px;background:#e8e8e6"></div><div class="mb" style="left:1512px;top:744px;width:24px;height:24px;background:#fff"></div><div class="mb" style="left:1536px;top:744px;width:18px;height:24px;background:#fff"></div><div class="mb" style="left:1359px;top:768px;width:9px;height:24px;background:#fefefe"></div><div class="mb" style="left:1368px;top:768px;width:24px;height:24px;background:#fefefe"></div><div class="mb" style="left:1392px;top:768px;width:24px;height:24px;background:#fefefe"></div><div class="mb" style="left:1416px;top:768px;width:24px;height:24px;background:#fefefe"></div><div class="mb" style="left:1440px;top:768px;width:24px;height:24px;background:#fefefe"></div><div class="mb" style="left:1464px;top:768px;width:24px;height:24px;background:#fefefe"></div><div class="mb" style="left:1488px;top:768px;width:24px;height:24px;background:#fefefe"></div><div class="mb" style="left:1512px;top:768px;width:24px;height:24px;background:#fefefe"></div><div class="mb" style="left:1536px;top:768px;width:18px;height:24px;background:#fefefe"></div><div class="mb" style="left:1359px;top:792px;width:9px;height:24px;background:#fff"></div><div class="mb" style="left:1368px;top:792px;width:24px;height:24px;background:#e1e0de"></div><div class="mb" style="left:1392px;top:792px;width:24px;height:24px;background:#dee0df"></div><div class="mb" style="left:1416px;top:792px;width:24px;height:24px;background:#e3e3e1"></div><div class="mb" style="left:1440px;top:792px;width:24px;height:24px;background:#dfdfdf"></div><div class="mb" style="left:1464px;top:792px;width:24px;height:24px;background:#dfdfdf"></div><div class="mb" style="left:1488px;top:792px;width:24px;height:24px;background:#e8e8e8"></div><div class="mb" style="left:1512px;top:792px;width:24px;height:24px;background:#fff"></div><div class="mb" style="left:1536px;top:792px;width:18px;height:24px;background:#fff"></div><div class="mb" style="left:1359px;top:816px;width:9px;height:24px;background:#fcfcfc"></div><div class="mb" style="left:1368px;top:816px;width:24px;height:24px;background:#f8f8f8"></div><div class="mb" style="left:1392px;top:816px;width:24px;height:24px;background:#fbfbfb"></div><div class="mb" style="left:1416px;top:816px;width:24px;height:24px;background:#f8f8f8"></div><div class="mb" style="left:1440px;top:816px;width:24px;height:24px;background:#fafafa"></div><div class="mb" style="left:1464px;top:816px;width:24px;height:24px;background:#f9f9f9"></div><div class="mb" style="left:1488px;top:816px;width:24px;height:24px;background:#fcfcfc"></div><div class="mb" style="left:1512px;top:816px;width:24px;height:24px;background:#fff"></div><div class="mb" style="left:1536px;top:816px;width:18px;height:24px;background:#fff"></div><div class="mb" style="left:1359px;top:840px;width:9px;height:24px;background:#fcfcfc"></div><div class="mb" style="left:1368px;top:840px;width:24px;height:24px;background:#fdfdfd"></div><div class="mb" style="left:1392px;top:840px;width:24px;height:24px;background:#fdfdfd"></div><div class="mb" style="left:1416px;top:840px;width:24px;height:24px;background:#f8f8f8"></div><div class="mb" style="left:1440px;top:840px;width:24px;height:24px;background:#fdfdfd"></div><div class="mb" style="left:1464px;top:840px;width:24px;height:24px;background:#fafafa"></div><div class="mb" style="left:1488px;top:840px;width:24px;height:24px;background:#f9f9f9"></div><div class="mb" style="left:1512px;top:840px;width:24px;height:24px;background:#fcfcfc"></div><div class="mb" style="left:1536px;top:840px;width:18px;height:24px;background:#fcfcfc"></div><div class="mb" style="left:1359px;top:864px;width:9px;height:24px;background:#fcfcfc"></div><div class="mb" style="left:1368px;top:864px;width:24px;height:24px;background:#dddcda"></div><div class="mb" style="left:1392px;top:864px;width:24px;height:24px;background:#dcdcdc"></div><div class="mb" style="left:1416px;top:864px;width:24px;height:24px;background:#e1e1e1"></div><div class="mb" style="left:1440px;top:864px;width:24px;height:24px;background:#dcdcdb"></div><div class="mb" style="left:1464px;top:864px;width:24px;height:24px;background:#dddddb"></div><div class="mb" style="left:1488px;top:864px;width:24px;height:24px;background:#ececec"></div><div class="mb" style="left:1512px;top:864px;width:24px;height:24px;background:#fff"></div><div class="mb" style="left:1536px;top:864px;width:18px;height:24px;background:#fff"></div><div class="mb" style="left:1359px;top:888px;width:9px;height:24px;background:#fefefe"></div><div class="mb" style="left:1368px;top:888px;width:24px;height:24px;background:#fefefe"></div><div class="mb" style="left:1392px;top:888px;width:24px;height:24px;background:#fefefe"></div><div class="mb" style="left:1416px;top:888px;width:24px;height:24px;background:#fefefe"></div><div class="mb" style="left:1440px;top:888px;width:24px;height:24px;background:#fefefe"></div><div class="mb" style="left:1464px;top:888px;width:24px;height:24px;background:#fefefe"></div><div class="mb" style="left:1488px;top:888px;width:24px;height:24px;background:#fefefe"></div><div class="mb" style="left:1512px;top:888px;width:24px;height:24px;background:#fefefe"></div><div class="mb" style="left:1536px;top:888px;width:18px;height:24px;background:#fefefe"></div><div class="mb" style="left:1359px;top:912px;width:9px;height:24px;background:#fcfcfc"></div><div class="mb" style="left:1368px;top:912px;width:24px;height:24px;background:#dcdbd9"></div><div class="mb" style="left:1392px;top:912px;width:24px;height:24px;background:#dcdedd"></div><div class="mb" style="left:1416px;top:912px;width:24px;height:24px;background:#dddddb"></div><div class="mb" style="left:1440px;top:912px;width:24px;height:24px;background:#dbdbdb"></div><div class="mb" style="left:1464px;top:912px;width:24px;height:24px;background:#dadad8"></div><div class="mb" style="left:1488px;top:912px;width:24px;height:24px;background:#e6e6e6"></div><div class="mb" style="left:1512px;top:912px;width:24px;height:24px;background:#fff"></div><div class="mb" style="left:1536px;top:912px;width:18px;height:24px;background:#fff"></div><div class="mb" style="left:1359px;top:936px;width:9px;height:18px;background:#ffffff"></div><div class="mb" style="left:1368px;top:936px;width:24px;height:18px;background:#ffffff"></div><div class="mb" style="left:1392px;top:936px;width:24px;height:18px;background:#ffffff"></div><div class="mb" style="left:1416px;top:936px;width:24px;height:18px;background:#ffffff"></div><div class="mb" style="left:1440px;top:936px;width:24px;height:18px;background:#ffffff"></div><div class="mb" style="left:1464px;top:936px;width:24px;height:18px;background:#ffffff"></div><div class="mb" style="left:1488px;top:936px;width:24px;height:18px;background:#ffffff"></div><div class="mb" style="left:1512px;top:936px;width:24px;height:18px;background:#ffffff"></div><div class="mb" style="left:1536px;top:936px;width:18px;height:18px;background:#ffffff"></div>
<div class="a" style="left:235px;top:513px;width:30px;height:30px;border-radius:50%;border:1px solid #e6e6e6;background:#fff"></div>
<svg style="left:245px;top:523px" width="10" height="10" viewBox="0 0 10 10"><path d="M4.8 1 L1.3 5 L4.8 9 M8.6 1 L5.1 5 L8.6 9" fill="none" stroke="#aaa" stroke-width="1.1"/></svg>
<div class="a" style="left:1795px;top:0;width:17px;height:977px;background:#f1f1f1"></div>
<div class="a" style="left:1797px;top:17px;width:13px;height:760px;background:#c1c1c1"></div>
<svg style="left:1796px;top:0" width="16" height="17"><path d="M4 11 L8 6 L12 11 Z" fill="#a3a3a3"/></svg>
<svg style="left:1796px;top:960px" width="16" height="17"><path d="M4.5 6 L8 10.5 L11.5 6 Z" fill="#505050"/></svg>
</body>
</html>
